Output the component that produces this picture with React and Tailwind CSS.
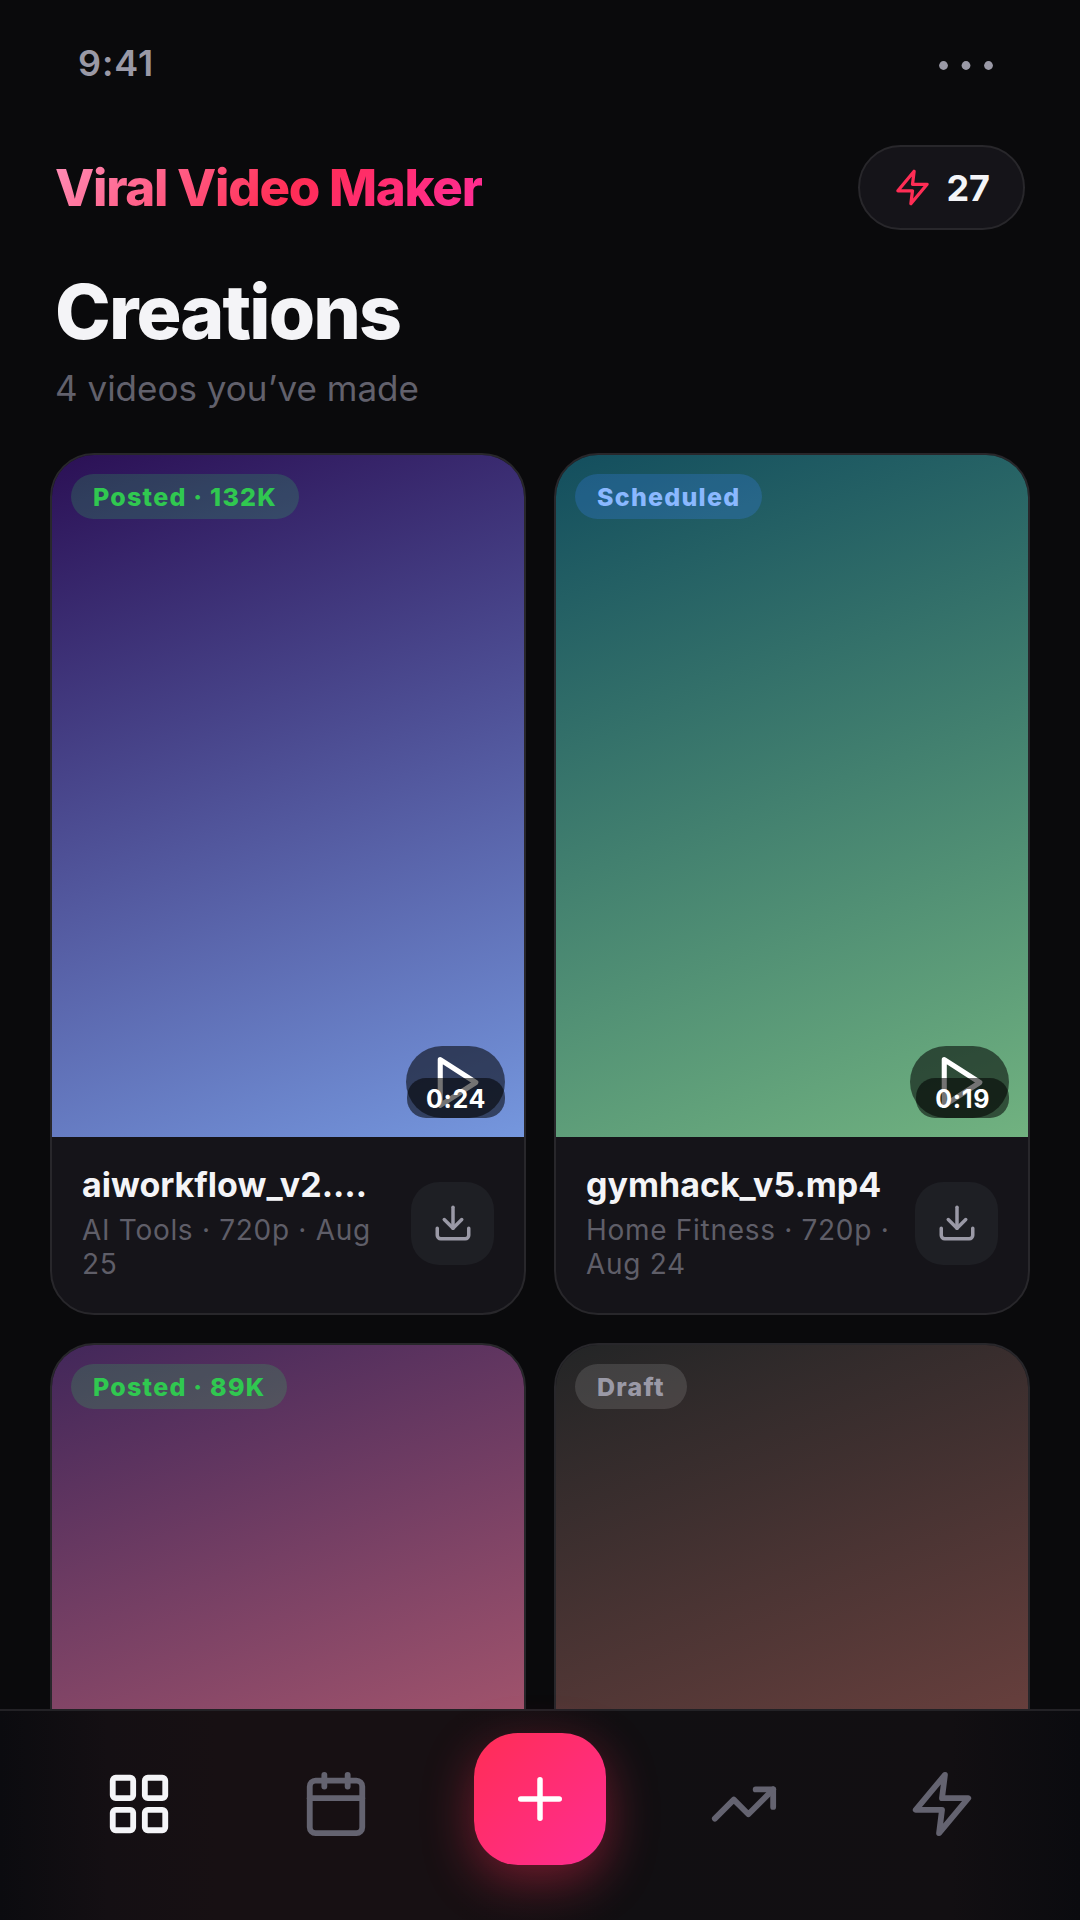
import React, { useState } from 'react';
import { Calendar, LayoutGrid, TrendingUp } from 'lucide-react';
import { FiDownload, FiPlus, FiZap } from 'react-icons/fi';
import clsx from 'clsx';

const CREATIONS = [
  {
    id: 1,
    file: 'aiworkflow_v2.mp4',
    meta: 'AI Tools · 720p · Aug 25',
    length: '0:24',
    status: 'posted',
    label: 'Posted · 132K',
    cover: 'bg-[linear-gradient(160deg,#2b1055,#7597de)]',
  },
  {
    id: 2,
    file: 'gymhack_v5.mp4',
    meta: 'Home Fitness · 720p · Aug 24',
    length: '0:19',
    status: 'scheduled',
    label: 'Scheduled',
    cover: 'bg-[linear-gradient(160deg,#134e5e,#71b280)]',
  },
  {
    id: 3,
    file: 'moneytips_v1.mp4',
    meta: 'Finance · 720p · Aug 22',
    length: '0:31',
    status: 'posted',
    label: 'Posted · 89K',
    cover: 'bg-[linear-gradient(160deg,#42275a,#d76d77)]',
  },
  {
    id: 4,
    file: 'storytime_v3.mp4',
    meta: 'Stories · 720p · Aug 21',
    length: '0:27',
    status: 'draft',
    label: 'Draft',
    cover: 'bg-[linear-gradient(160deg,#232526,#8e4e4a)]',
  },
];

const BADGE_STYLES = {
  posted: 'bg-[#30d158]/20 text-[#30c850]',
  scheduled: 'bg-[#3b82f6]/25 text-[#8ab8ff]',
  draft: 'bg-white/12 text-[#9a99a6]',
};

const PlayIcon = () => (
  <svg
    width="61"
    height="61"
    viewBox="0 0 24 24"
    fill="none"
    stroke="currentColor"
    strokeWidth="2"
    strokeLinecap="round"
    strokeLinejoin="round"
    aria-hidden="true"
  >
    <polygon points="6 3 20 12 6 21 6 3" />
  </svg>
);

const StatusBar = () => (
  <div className="flex items-center justify-between pt-[41px] pl-[78px] pr-[87px] text-[#9a99a6]">
    <span className="text-[36px] leading-[44px] font-semibold tracking-wide">9:41</span>
    <svg width="54" height="14" viewBox="0 0 54 14" fill="currentColor" aria-hidden="true">
      <circle cx="4.5" cy="9.5" r="4.4" />
      <circle cx="27" cy="9.5" r="4.4" />
      <circle cx="49.5" cy="9.5" r="4.4" />
    </svg>
  </div>
);

const Header = ({ credits }) => (
  <header className="flex items-center justify-between px-[55px] mt-[60px]">
    <span className="text-[51px] leading-[60px] font-extrabold tracking-tight bg-[linear-gradient(135deg,#ff8fb8,#ff2d55_55%,#ff2d9b)] bg-clip-text text-transparent">
      Viral Video Maker
    </span>
    <button className="flex items-center gap-[14px] h-[85px] px-[33px] rounded-full border-2 border-[#28272b] bg-[#151419] text-[#f4f4f7]">
      <FiZap size={39} className="text-[#ff2d55]" />
      <span className="text-[36px] leading-[44px] font-bold">{credits}</span>
    </button>
  </header>
);

const CreationCard = ({ item }) => (
  <article className="overflow-hidden rounded-[44px] border-2 border-[#28272b] bg-[#151419]">
    <div className={clsx('relative h-[682px]', item.cover)}>
      <span
        className={clsx(
          'absolute left-[19px] top-[19px] h-[45px] px-[22px] rounded-full text-[25px] leading-[46px] font-extrabold tracking-wider',
          BADGE_STYLES[item.status]
        )}
      >
        {item.label}
      </span>
      <button
        aria-label={`Play ${item.file}`}
        className="absolute right-[19px] bottom-[19px] flex items-center justify-center w-[99px] h-[72px] rounded-full bg-black/55 text-white"
      >
        <PlayIcon />
      </button>
      {/* Length chip sits on top of the play button */}
      <span className="absolute right-[19px] bottom-[19px] h-[40px] px-[19px] rounded-[19px] bg-black/55 text-[25px] leading-[42px] font-bold tracking-wide text-white pointer-events-none">
        {item.length}
      </span>
    </div>

    <div className="flex items-center gap-[22px] px-[30px] pt-7 pb-8">
      <div className="flex-1 min-w-0">
        <h2 className="truncate text-[34px] leading-[40px] font-bold text-[#f4f4f7]">{item.file}</h2>
        <p className="mt-2 text-[28px] leading-[34px] tracking-wide text-[#5f5e68]">{item.meta}</p>
      </div>
      <button
        aria-label={`Download ${item.file}`}
        className="flex shrink-0 items-center justify-center size-[83px] rounded-[28px] bg-[#1e1f24] text-[#9a99a6]"
      >
        <FiDownload size={42} />
      </button>
    </div>
  </article>
);

const NavButton = ({ label, active, onClick, children }) => (
  <button
    aria-label={label}
    onClick={onClick}
    className={clsx(
      'flex items-center justify-center w-[119px] h-[120px] mt-[11px]',
      active ? 'text-[#f4f4f7]' : 'text-[#646370]'
    )}
  >
    {children}
  </button>
);

const BottomNav = () => {
  const [tab, setTab] = useState('creations');

  return (
    <nav className="fixed inset-x-0 bottom-0 h-[211px] pt-[22px] px-[79px] flex items-start justify-between border-t-2 border-[#232226] bg-[linear-gradient(90deg,#0b0b0f,#140f13_10%,#171013_20%,#171013_42%,#110f12_58%,#120f12_88%,#0b0b0f)]">
      <NavButton label="Creations" active={tab === 'creations'} onClick={() => setTab('creations')}>
        <LayoutGrid size={70} />
      </NavButton>
      <NavButton label="Schedule" active={tab === 'schedule'} onClick={() => setTab('schedule')}>
        <Calendar size={70} />
      </NavButton>
      <button
        aria-label="New video"
        className="flex items-center justify-center size-[132px] rounded-[44px] bg-[linear-gradient(135deg,#ff2d55,#ff2d92)] text-white shadow-[0_16px_50px_rgba(255,45,85,0.4)]"
      >
        <FiPlus size={66} />
      </button>
      <NavButton label="Trends" active={tab === 'trends'} onClick={() => setTab('trends')}>
        <TrendingUp size={70} />
      </NavButton>
      <NavButton label="Credits" active={tab === 'credits'} onClick={() => setTab('credits')}>
        <FiZap size={70} />
      </NavButton>
    </nav>
  );
};

export default function App() {
  return (
    <div className="h-screen overflow-y-auto [scrollbar-width:none] bg-[#0a0a0c] font-['Inter',sans-serif] text-[#f4f4f7]">
      <StatusBar />
      <Header credits={27} />
      <main className="pb-[240px]">
        <div className="px-[55px] mt-10">
          <h1 className="text-[75px] leading-[84px] font-extrabold tracking-tight">Creations</h1>
          <p className="mt-3 text-[35px] leading-[44px] text-[#62616c]">{CREATIONS.length} videos you’ve made</p>
        </div>
        <div className="grid grid-cols-2 gap-7 px-[50px] mt-[43px]">
          {CREATIONS.map((item) => (
            <CreationCard key={item.id} item={item} />
          ))}
        </div>
      </main>
      <BottomNav />
    </div>
  );
}
